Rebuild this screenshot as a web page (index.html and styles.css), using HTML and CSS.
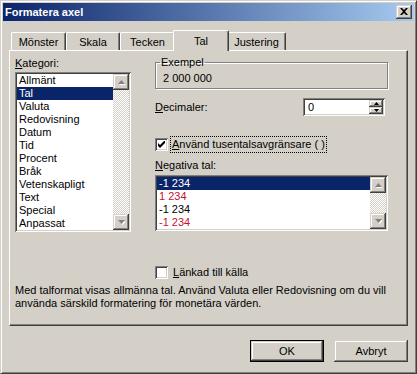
FILE: index.html
```html
<!DOCTYPE html>
<html lang="sv">
<head>
<meta charset="utf-8">
<title>Formatera axel</title>
<link rel="stylesheet" href="styles.css">
</head>
<body>
<div class="window">
  <div class="titlebar">
    <span class="title">Formatera axel</span>
    <div class="close raised">
      <svg width="8" height="7" viewBox="0 0 8 7"><path d="M0 0h2l2 2 2-2h2L5 3.5 8 7H6L4 5 2 7H0l3-3.5z" fill="#000"/></svg>
    </div>
  </div>
  <div class="body">
    <div class="tabs">
      <div class="tab w55">Mönster</div>
      <div class="tab w54">Skala</div>
      <div class="tab w55">Tecken</div>
      <div class="tab selected">Tal</div>
      <div class="tab w59">Justering</div>
    </div>
    <div class="panel">
      <div class="top">
        <div class="left">
          <div class="label"><u>K</u>ategori:</div>
          <div class="listbox cat">
            <ul class="items">
              <li>Allmänt</li>
              <li class="sel">Tal</li>
              <li>Valuta</li>
              <li>Redovisning</li>
              <li>Datum</li>
              <li>Tid</li>
              <li>Procent</li>
              <li>Bråk</li>
              <li>Vetenskapligt</li>
              <li>Text</li>
              <li>Special</li>
              <li>Anpassat</li>
            </ul>
            <div class="vscroll">
              <div class="sbtn raised"><svg width="7" height="5" viewBox="0 0 7 5"><path d="M4.5 1 8 5H1z" fill="#fff"/><path d="M3.5 0 7 4H0z" fill="#808080"/></svg></div>
              <div class="track"></div>
              <div class="sbtn raised"><svg width="7" height="5" viewBox="0 0 7 5"><path d="M1 1h7L4.5 5z" fill="#fff"/><path d="M0 0h7L3.5 4z" fill="#808080"/></svg></div>
            </div>
          </div>
        </div>
        <div class="right">
          <fieldset class="group">
            <legend>Exempel</legend>
            <div class="sample">2 000 000</div>
          </fieldset>
          <div class="decrow">
            <span class="declabel"><u>D</u>ecimaler:</span>
            <div class="spinner sunken">
              <span class="val">0</span>
              <div class="spinbtns">
                <div class="spin raised"><svg width="5" height="3" viewBox="0 0 5 3"><path d="M2.5 0 5 3H0z" fill="#000"/></svg></div>
                <div class="spin raised"><svg width="5" height="3" viewBox="0 0 5 3"><path d="M0 0h5L2.5 3z" fill="#000"/></svg></div>
              </div>
            </div>
          </div>
          <div class="check first">
            <div class="box sunken"><svg width="7" height="7" viewBox="0 0 7 7"><path d="M0 2v3l2 2 5-5V-1L2 4z" fill="#000"/></svg></div>
            <span class="focus"><u>A</u>nvänd tusentalsavgränsare ( )</span>
          </div>
          <div class="label neg"><u>N</u>egativa tal:</div>
          <div class="listbox negbox">
            <ul class="items">
              <li class="sel">-1 234</li>
              <li class="red">1 234</li>
              <li>-1 234</li>
              <li class="red">-1 234</li>
            </ul>
            <div class="vscroll">
              <div class="sbtn raised"><svg width="7" height="5" viewBox="0 0 7 5"><path d="M4.5 1 8 5H1z" fill="#fff"/><path d="M3.5 0 7 4H0z" fill="#808080"/></svg></div>
              <div class="track"></div>
              <div class="sbtn raised"><svg width="7" height="5" viewBox="0 0 7 5"><path d="M1 1h7L4.5 5z" fill="#fff"/><path d="M0 0h7L3.5 4z" fill="#808080"/></svg></div>
            </div>
          </div>
          <div class="check linked">
            <div class="box sunken"></div>
            <span class="plain"><u>L</u>änkad till källa</span>
          </div>
        </div>
      </div>
      <p class="desc">Med talformat visas allmänna tal. Använd Valuta eller Redovisning om du vill använda särskild formatering för monetära värden.</p>
    </div>
    <div class="buttons">
      <div class="btn default"><div class="btninner raised">OK</div></div>
      <div class="btn"><div class="btninner raised">Avbryt</div></div>
    </div>
  </div>
</div>
</body>
</html>
```

FILE: styles.css
```css
* { box-sizing: border-box; }
html, body { margin: 0; padding: 0; background: #d4d0c8; }
body {
  font-family: "Liberation Sans", Arial, sans-serif;
  font-size: 11px;
  line-height: 13px;
  color: #000;
}
u { text-decoration: underline; text-underline-offset: 1px; }

.raised {
  background: #d4d0c8;
  box-shadow: inset -1px -1px #404040, inset 1px 1px #d4d0c8, inset -2px -2px #808080, inset 2px 2px #fff;
}
.sunken {
  background: #fff;
  box-shadow: inset 1px 1px #808080, inset -1px -1px #fff, inset 2px 2px #404040, inset -2px -2px #d4d0c8;
}

.window {
  width: 417px;
  height: 374px;
  border: 1px solid;
  border-color: #d4d0c8 #404040 #404040 #d4d0c8;
  box-shadow: inset 1px 1px #fff, inset -1px -1px #808080;
  padding: 2px;
  display: flex;
  flex-direction: column;
}

.titlebar {
  height: 18px;
  background: linear-gradient(to right, #0a246a, #a6caf0);
  display: flex;
  align-items: center;
  justify-content: space-between;
  padding: 0 2px 0 2px;
}
.title {
  color: #fff;
  font-weight: bold;
  font-size: 11px;
}
.close {
  width: 16px;
  height: 14px;
  display: flex;
  align-items: center;
  justify-content: center;
  padding-bottom: 1px;
}

.body {
  padding: 9px 6px 0 6px;
  flex: 1;
  display: flex;
  flex-direction: column;
}

.tabs {
  height: 20px;
  display: flex;
  align-items: flex-end;
  padding-left: 2px;
}
.tab {
  height: 18px;
  border-top: 1px solid #fff;
  border-left: 1px solid #fff;
  border-right: 1px solid #404040;
  box-shadow: inset -1px 0 #808080;
  border-radius: 2px 2px 0 0;
  text-align: center;
  padding-top: 3px;
  background: #d4d0c8;
}
.w54 { width: 54px; }
.w55 { width: 55px; }
.w59 { width: 59px; }
.tab.selected {
  width: 56px;
  height: 21px;
  margin: 0 -2px -1px -2px;
  padding-top: 4px;
  position: relative;
  z-index: 1;
}

.panel {
  height: 276px;
  border-top: 1px solid #fff;
  border-left: 1px solid #fff;
  border-right: 1px solid #404040;
  border-bottom: 1px solid #404040;
  box-shadow: inset -1px -1px #808080;
  padding: 6px 0 0 5px;
}

.top {
  display: flex;
  gap: 24px;
}
.left { width: 116px; }
.right { width: 233px; }

.label { height: 13px; }
.listbox {
  display: flex;
  background: #fff;
  padding: 2px;
  box-shadow: inset 1px 1px #808080, inset -1px -1px #fff, inset 2px 2px #404040, inset -2px -2px #d4d0c8;
  overflow: hidden;
}
.cat {
  margin-top: 2px;
  height: 160px;
}
.items {
  list-style: none;
  margin: 0;
  padding: 0;
  flex: 1;
}
.items li {
  height: 13px;
  padding-left: 2px;
  white-space: nowrap;
}
.items li.sel {
  background: #0a246a;
  color: #fff;
}
.items li.red { color: #c8102e; }

.vscroll {
  width: 16px;
  display: flex;
  flex-direction: column;
}
.sbtn {
  width: 16px;
  height: 16px;
  display: flex;
  align-items: center;
  justify-content: center;
  flex: none;
}
.track {
  flex: 1;
  background: repeating-conic-gradient(#fff 0 25%, #d4d0c8 0 50%) 0 0 / 2px 2px;
}

.group {
  margin: -1px 0 0 0;
  padding: 3px 0 2px 7px;
  border: 1px solid #808080;
  box-shadow: inset 1px 1px #fff, 1px 1px #fff;
  height: 33px;
}
.group legend {
  padding: 0 1px;
  margin-left: -3px;
  line-height: 13px;
}
.sample { height: 13px; }

.decrow {
  margin-top: 9px;
  display: flex;
  align-items: center;
}
.declabel { width: 148px; }
.spinner {
  width: 82px;
  height: 18px;
  padding: 2px;
  display: flex;
  align-items: center;
}
.val { flex: 1; padding-left: 3px; }
.spinbtns {
  width: 14px;
  height: 14px;
  display: flex;
  flex-direction: column;
}
.spin {
  height: 7px;
  display: flex;
  align-items: center;
  justify-content: center;
}

.check {
  display: flex;
  align-items: center;
  gap: 2px;
}
.check.first { margin-top: 20px; }
.box {
  width: 13px;
  height: 13px;
  display: flex;
  align-items: center;
  justify-content: center;
  flex: none;
}
.focus {
  border: 1px dotted #000;
  padding: 1px 1px 1px 1px;
}
.plain { padding-left: 3px; }

.neg { margin-top: 6px; }
.negbox {
  margin-top: 3px;
  height: 56px;
}

.check.linked { margin-top: 35px; }

.desc {
  margin: 5px 0 0 0;
  width: 385px;
}

.buttons {
  margin-top: 14px;
  display: flex;
  justify-content: flex-end;
  gap: 10px;
}
.btn {
  width: 74px;
  height: 22px;
  display: flex;
}
.btn.default {
  border: 1px solid #000;
}
.btninner {
  flex: 1;
  display: flex;
  align-items: center;
  justify-content: center;
}
```
